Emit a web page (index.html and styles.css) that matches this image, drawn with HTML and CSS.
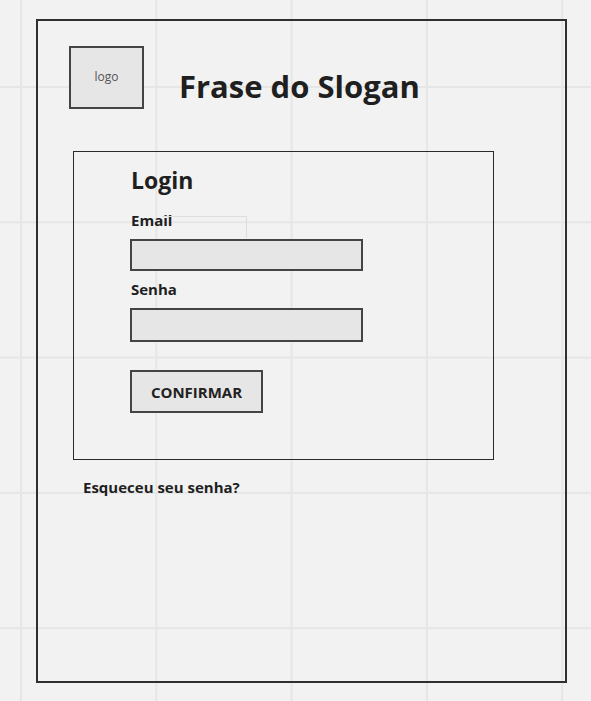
FILE: index.html
```html
<!DOCTYPE html>
<html lang="pt">
<head>
<meta charset="utf-8">
<title>Login</title>
<link rel="stylesheet" href="styles.css">
</head>
<body>
<div class="frame">
  <header class="header">
    <div class="logo">logo</div>
    <h1 class="slogan">Frase do Slogan</h1>
  </header>
  <section class="login">
    <h2 class="login-title">Login</h2>
    <label class="label">Email</label>
    <div class="input input-email"></div>
    <label class="label">Senha</label>
    <div class="input input-senha"></div>
    <button class="btn" type="button">CONFIRMAR</button>
    <span class="ghost"></span>
  </section>
  <a class="forgot">Esqueceu seu senha?</a>
</div>
</body>
</html>
```

FILE: styles.css
```css
* { box-sizing: border-box; }

html, body {
  margin: 0;
  padding: 0;
}

body {
  width: 591px;
  height: 701px;
  overflow: hidden;
  font-family: "Open Sans", "Noto Sans", sans-serif;
  color: #1f1f1f;
  background-color: #f2f2f2;
  background-image:
    linear-gradient(to right, #e6e6e6 0, #e6e6e6 2px, transparent 2px),
    linear-gradient(to bottom, #e6e6e6 0, #e6e6e6 2px, transparent 2px);
  background-size: 135.3px 135.3px;
  background-position: 20px 86px;
  padding-top: 19px;
  padding-left: 36px;
}

.frame {
  width: 531px;
  height: 664px;
  border: 2px solid #2f2f2f;
  padding: 25px 0 0 31px;
  display: flex;
  flex-direction: column;
  align-items: flex-start;
}

.header {
  display: flex;
  align-items: flex-start;
}

.logo {
  width: 75px;
  height: 63px;
  border: 2px solid #444;
  background: #e6e6e6;
  display: flex;
  align-items: center;
  justify-content: center;
  font-size: 12px;
  color: #555;
  padding-bottom: 2px;
}

.slogan {
  margin: 19.5px 0 2px 35px;
  font-size: 31px;
  line-height: 40px;
  font-weight: 700;
  color: #1f1f1f;
}

.login {
  position: relative;
  margin: 42px 0 0 4px;
  width: 421px;
  height: 309px;
  border: 1px solid #2a2a2a;
  padding: 12px 0 0 56px;
  display: flex;
  flex-direction: column;
  align-items: flex-start;
}

.login-title {
  margin: 0 0 0 1px;
  font-size: 23px;
  line-height: 32px;
  font-weight: 700;
}

.label {
  margin-left: 1px;
  font-size: 15px;
  line-height: 20px;
  font-weight: 700;
}

.login-title + .label { margin-top: 14px; }

.input {
  width: 233px;
  border: 2px solid #444;
  background: #e6e6e6;
  margin-top: 9px;
}

.input-email { height: 32px; margin-bottom: 8px; }
.input-senha { height: 34px; }

.btn {
  margin-top: 28px;
  width: 133px;
  height: 43px;
  border: 2px solid #444;
  background: #e6e6e6;
  font-family: "Open Sans", "Noto Sans", sans-serif;
  font-size: 15px;
  font-weight: 700;
  color: #222;
  padding: 0;
}

.ghost {
  position: absolute;
  left: 88px;
  top: 64px;
  width: 85px;
  height: 22px;
  border-top: 1px solid #dedede;
  border-right: 1px solid #dedede;
  pointer-events: none;
}

.forgot {
  margin: 16.5px 0 0 14px;
  font-size: 15px;
  line-height: 20px;
  font-weight: 700;
  color: #1f1f1f;
}
```
